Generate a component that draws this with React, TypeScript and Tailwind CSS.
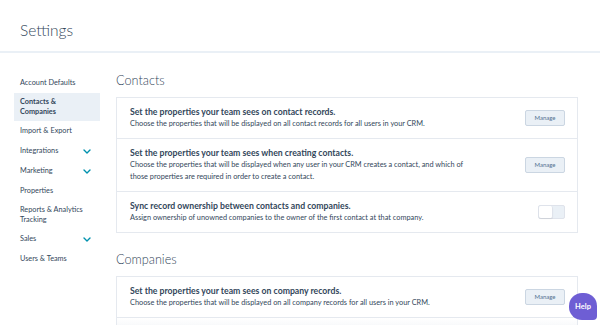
const navItems = [
    { label: 'Account Defaults' },
    { label: 'Contacts & Companies', active: true, twoLine: true },
    { label: 'Import & Export' },
    { label: 'Integrations', chevron: true },
    { label: 'Marketing', chevron: true },
    { label: 'Properties' },
    { label: 'Reports & Analytics Tracking', twoLine: true },
    { label: 'Sales', chevron: true },
    { label: 'Users & Teams' },
];

function Chevron() {
    return (
        <svg width="8" height="5" viewBox="0 0 8 5" className="mr-[3px]">
            <polyline points="1,1 4,4 7,1" fill="none" stroke="#0091ae" strokeWidth="1.4" strokeLinecap="round" strokeLinejoin="round" />
        </svg>
    );
}

function ManageButton() {
    return (
        <button className="w-[40px] h-[16px] shrink-0 rounded-[2px] border border-[#cbd6e2] bg-[#eaf0f6] text-[6px] text-[#516f90] leading-none">
            Manage
        </button>
    );
}

function Toggle() {
    return (
        <div className="w-[27px] h-[14px] shrink-0 flex rounded-[2px] border border-[#dfe3eb] bg-[#eaf0f6]">
            <div className="w-[14px] h-full bg-white rounded-[2px] border-r border-[#dfe3eb] shadow-[0_1px_1px_rgba(0,0,0,0.08)]" />
        </div>
    );
}

interface RowProps {
    title: string;
    lines: string[];
    action: React.ReactNode;
    last?: boolean;
}

function Row({ title, lines, action, last }: RowProps) {
    return (
        <div className={`flex items-center justify-between pl-[13px] pr-[12px] py-[8px] ${last ? '' : 'border-b border-[#e5e9ef]'}`}>
            <div>
                <div className="text-[8.7px] leading-[12px] font-bold text-[#33475b]">{title}</div>
                {lines.map((l) => (
                    <div key={l} className="text-[7.35px] leading-[12px] text-[#33475b]">{l}</div>
                ))}
            </div>
            {action}
        </div>
    );
}

export default function App() {
    return (
        <div className="relative w-[600px] h-[325px] overflow-hidden bg-white font-['Lato',sans-serif] text-[#33475b]">
            <div className="h-[53px] border-b-2 border-[#eaf0f6] px-[20px] pt-[19px]">
                <div className="text-[15.5px] leading-[22px] font-light">Settings</div>
            </div>

            <div className="flex">
                <div className="w-[100px] pl-[14px] pt-[20px]">
                    {navItems.map((item) => (
                        <div
                            key={item.label}
                            className={`flex items-center justify-between px-[6px] text-[7.3px] ${item.twoLine ? 'py-[4px] leading-[10px]' : 'h-[20px]'} ${item.active ? 'bg-[#eaf0f6] font-bold' : ''}`}
                        >
                            <span className={item.twoLine ? 'w-[70px]' : ''}>{item.label}</span>
                            {item.chevron && <Chevron />}
                        </div>
                    ))}
                </div>

                <div className="w-[462px] ml-[16px]">
                    <div className="pt-[17px] text-[12.7px] leading-[20px] font-light">Contacts</div>
                    <div className="mt-[7px] border border-[#e5e9ef]">
                        <Row
                            title="Set the properties your team sees on contact records."
                            lines={['Choose the properties that will be displayed on all contact records for all users in your CRM.']}
                            action={<ManageButton />}
                        />
                        <Row
                            title="Set the properties your team sees when creating contacts."
                            lines={[
                                'Choose the properties that will be displayed when any user in your CRM creates a contact, and which of',
                                'those properties are required in order to create a contact.',
                            ]}
                            action={<ManageButton />}
                        />
                        <Row
                            title="Sync record ownership between contacts and companies."
                            lines={['Assign ownership of unowned companies to the owner of the first contact at that company.']}
                            action={<Toggle />}
                            last
                        />
                    </div>

                    <div className="mt-[16px] text-[12.7px] leading-[20px] font-light">Companies</div>
                    <div className="mt-[7px] border border-[#e5e9ef]">
                        <Row
                            title="Set the properties your team sees on company records."
                            lines={['Choose the properties that will be displayed on all company records for all users in your CRM.']}
                            action={<ManageButton />}
                        />
                        <div className="h-[20px] bg-gradient-to-b from-white to-[#eceff3]" />
                    </div>
                </div>
            </div>

            <div className="absolute left-[569px] top-[293px] w-[28px] h-[27px] rounded-[13px] rounded-br-[4px] bg-[#6e5ed4] flex items-center justify-center">
                <span className="text-white text-[7.5px] font-bold">Help</span>
            </div>
        </div>
    );
}
